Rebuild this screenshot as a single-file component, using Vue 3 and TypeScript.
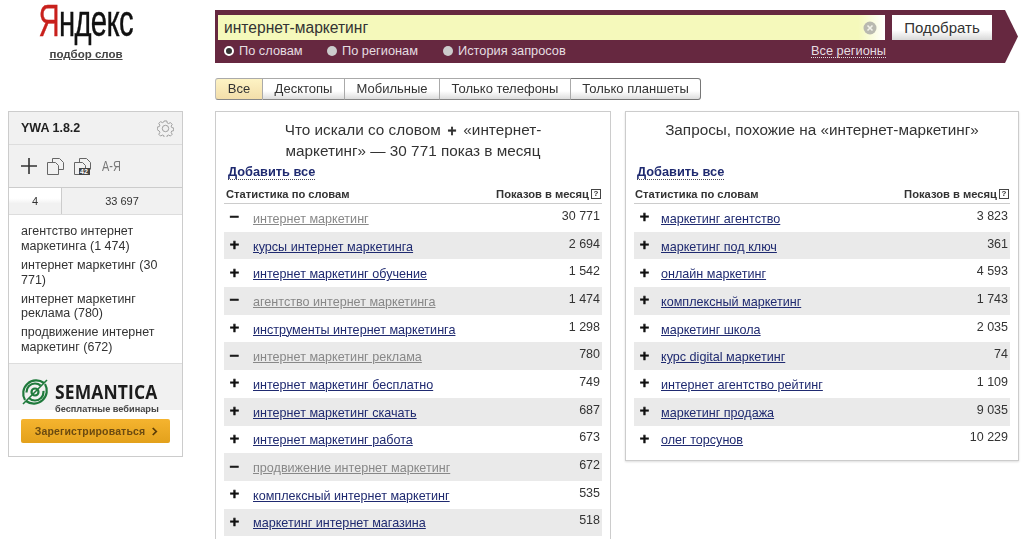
<script setup lang="ts">
interface Row { name: string; count: string; used?: boolean }
const leftRows: Row[] = [
  { name: 'интернет маркетинг', count: '30 771', used: true },
  { name: 'курсы интернет маркетинга', count: '2 694' },
  { name: 'интернет маркетинг обучение', count: '1 542' },
  { name: 'агентство интернет маркетинга', count: '1 474', used: true },
  { name: 'инструменты интернет маркетинга', count: '1 298' },
  { name: 'интернет маркетинг реклама', count: '780', used: true },
  { name: 'интернет маркетинг бесплатно', count: '749' },
  { name: 'интернет маркетинг скачать', count: '687' },
  { name: 'интернет маркетинг работа', count: '673' },
  { name: 'продвижение интернет маркетинг', count: '672', used: true },
  { name: 'комплексный интернет маркетинг', count: '535' },
  { name: 'маркетинг интернет магазина', count: '518' },
]
const rightRows: Row[] = [
  { name: 'маркетинг агентство', count: '3 823' },
  { name: 'маркетинг под ключ', count: '361' },
  { name: 'онлайн маркетинг', count: '4 593' },
  { name: 'комплексный маркетинг', count: '1 743' },
  { name: 'маркетинг школа', count: '2 035' },
  { name: 'курс digital маркетинг', count: '74' },
  { name: 'интернет агентство рейтинг', count: '1 109' },
  { name: 'маркетинг продажа', count: '9 035' },
  { name: 'олег торсунов', count: '10 229' },
]
const tabs = ['Все', 'Десктопы', 'Мобильные', 'Только телефоны', 'Только планшеты']
const modes = ['По словам', 'По регионам', 'История запросов']
const picks = ['агентство интернет маркетинга (1 474)', 'интернет маркетинг (30 771)', 'интернет маркетинг реклама (780)', 'продвижение интернет маркетинг (672)']
const panels = [
  { key: 'a', rows: leftRows },
  { key: 'b', rows: rightRows },
]
</script>

<template>
  <div class="page">
    <header class="top">
      <div class="brand">
        <div class="logo"><span class="ya">Я</span>ндекс</div>
        <a class="sub">подбор слов</a>
      </div>
      <div class="searchbar">
        <div class="search-row">
          <div class="input">
            <span>интернет-маркетинг</span>
            <svg class="clear" viewBox="0 0 14 14" width="14" height="14">
              <circle cx="7" cy="7" r="6.5" fill="#b9b9b0" />
              <path d="M4.5 4.5l5 5M9.500 4.500l-5 5" stroke="#f2f2ea" stroke-width="1.600" />
            </svg>
          </div>
          <button class="go">Подобрать</button>
        </div>
        <div class="mode-row">
          <span v-for="(m, i) in modes" :key="m" class="mode" :class="'mode' + i">
            <i class="radio" :class="{ on: i === 0 }"></i>{{ m }}
          </span>
          <a class="regions">Все регионы</a>
        </div>
        <svg class="arrow" viewBox="0 0 18 53" width="18" height="53" preserveAspectRatio="none">
          <path d="M0 0h5l13 26.500L5 53H0z" fill="#662840" />
        </svg>
      </div>
    </header>

    <nav class="tabs">
      <span v-for="(t, i) in tabs" :key="t" class="tab" :class="{ active: i === 0 }">{{ t }}</span>
    </nav>

    <div class="body">
      <aside class="side">
        <div class="side-head">
          <b>YWA 1.8.2</b>
          <svg viewBox="0 0 18 18" width="17" height="17" fill="none" stroke="#9a9a9a" stroke-width="1">
            <path d="M7.600 1h2.800l.4 2.100 1.500.7 1.900-1.100 1.900 2-1.100 1.800.6 1.500 2.100.5v2.800l-2.100.4-.6 1.500 1.100 1.900-1.900 1.900-1.900-1.100-1.500.6-.4 2.100H7.600l-.4-2.100-1.500-.6-1.900 1.100-1.900-1.900 1.100-1.900-.6-1.500L.3 10.300V7.500l2.100-.5.600-1.500-1.100-1.800 1.900-2 1.900 1.100 1.500-.7z" />
            <circle cx="9" cy="9" r="3.400" />
          </svg>
        </div>
        <div class="side-tools">
          <svg viewBox="0 0 16 16" width="16" height="16"><path d="M8 0v16M0 8h16" stroke="#333" stroke-width="1.600" /></svg>
          <svg viewBox="0 0 17 17" width="17" height="17" fill="none" stroke="#666"><path d="M.5 4.500h8l3 3v9H.5zM5.500 4.500V.5h7l4 4v7h-5" /></svg>
          <svg viewBox="0 0 17 17" width="17" height="17" fill="none" stroke="#666">
            <path d="M.5 4.500h8l3 3v9H.5zM5.500 4.500V.5h7l4 4v7" />
            <rect x="5" y="10" width="11" height="7" fill="#444" stroke="none" />
            <text x="6" y="16" font-size="7" font-weight="700" fill="#fff" stroke="none" font-family="Liberation Sans">42</text>
          </svg>
          <span class="az">А-Я</span>
        </div>
        <div class="side-stats">
          <span class="stat-a">4</span>
          <span class="stat-b">33 697</span>
        </div>
        <div class="side-list">
          <p v-for="p in picks" :key="p">{{ p }}</p>
        </div>
        <div class="promo">
          <div class="promo-logo">
            <svg viewBox="0 0 30 30" width="30" height="32" fill="none" stroke="#1f7a3c" stroke-width="2.200">
              <path d="M24 6A13 13 0 0 0 5 23" />
              <path d="M6 24A13 13 0 0 0 25 7" />
              <circle cx="15" cy="15" r="8.500" stroke-dasharray="20 6" />
              <circle cx="15" cy="15" r="3.500" />
              <path d="M3 27L27 3" stroke-width="1.600" />
            </svg>
            <div class="promo-text">
              <div class="sem">SEMANTICA</div>
              <div class="web">бесплатные вебинары</div>
            </div>
          </div>
        </div>
        <div class="promo-foot">
          <button class="reg">Зарегистрироваться
            <svg viewBox="0 0 8 10" width="7" height="9" fill="none" stroke="#5a3c08" stroke-width="2"><path d="M2 1l4 4-4 4" /></svg>
          </button>
        </div>
      </aside>

      <section v-for="(p, n) in panels" :key="p.key" class="panel" :class="'panel-' + p.key">
        <h2 v-if="n === 0">Что искали со словом <b class="ttl-plus">+</b> «интернет-<br />маркетинг» — 30 771 показ в месяц</h2>
        <h2 v-else>Запросы, похожие на «интернет-маркетинг»</h2>
        <a class="addall">Добавить все</a>
        <div class="thead">
          <span>Статистика по словам</span>
          <span class="thr">Показов в месяц<i class="q">?</i></span>
        </div>
        <div v-for="r in p.rows" :key="r.name" class="row" :class="{ used: r.used }">
          <b class="sign">{{ r.used ? '−' : '+' }}</b>
          <a class="name">{{ r.name }}</a>
          <span class="count">{{ r.count }}</span>
        </div>
      </section>
    </div>
  </div>
</template>

<style>
html, body { margin: 0; background: #fff; overflow: hidden; }
</style>

<style scoped>
.page {
  width: 1024px;
  height: 539px;
  overflow: hidden;
  font-family: "Liberation Sans", Arial, sans-serif;
  color: #222;
  filter: blur(0.3px);
}
.top { display: flex; height: 63px; padding-top: 10px; box-sizing: border-box; }
.brand { width: 215px; margin-top: -10px; display: flex; flex-direction: column; align-items: center; padding-right: 43px; box-sizing: border-box; }
.logo {
  font-size: 45px; line-height: 42px; color: #111; height: 42px; letter-spacing: -1px;
  transform: scaleX(.65); transform-origin: center; white-space: nowrap; -webkit-text-stroke: .4px #111;
}
.ya { color: #c8201c; -webkit-text-stroke: .4px #c8201c; }
.sub { font-size: 11.500px; font-weight: 700; color: #444; text-decoration: underline; margin-top: 6px; }
.searchbar { position: relative; width: 786px; height: 53px; background: #662840; box-sizing: border-box; padding: 5px 0 0 3px; }
.arrow { position: absolute; left: 786px; top: 0; margin-left: -1px; }
.search-row { display: flex; align-items: stretch; height: 25px; }
.input {
  width: 667px; display: flex; align-items: center; justify-content: space-between;
  padding: 0 8px 0 6px; box-sizing: border-box; font-size: 15.600px; color: #333;
  background: linear-gradient(90deg, #f5f9bb 96%, #fff 100%);
}
.go {
  margin-left: 7px; width: 100px; border: 0; padding: 0; font: inherit; font-size: 15px; color: #333;
  background: linear-gradient(#fff 60%, #d8d8d8);
}
.mode-row { display: flex; align-items: center; height: 21px; color: #e5dde0; font-size: 12.800px; position: relative; padding-bottom: 1px; }
.mode { display: flex; align-items: center; white-space: nowrap; }
.mode0 { margin-left: 6px; width: 103px; }
.mode1 { width: 116px; }
.radio { width: 10px; height: 10px; border-radius: 50%; background: #ccc; margin-right: 5px; box-sizing: border-box; }
.radio.on { background: #333; border: 2px solid #fff; }
.regions { position: absolute; left: 593px; border-bottom: 1px dotted #ddd; line-height: 13px; }
.tabs { display: flex; margin: 15px 0 0 215px; height: 22px; width: fit-content; }
.tab {
  display: flex; align-items: center; justify-content: center; font-size: 13px; color: #333; height: 22px; box-sizing: border-box; padding-bottom: 2px;
  border: 1px solid #aaa; border-left: 0; border-bottom-color: #888; background: linear-gradient(#fff 60%, #ddd); white-space: nowrap;
}
.tab:first-child { border-left: 1px solid #bbb; border-radius: 3px 0 0 3px; background: linear-gradient(#fdf3c4, #f3deaa); width: 48px; }
.tab:nth-child(2) { width: 82px; }
.tab:nth-child(3) { width: 95px; }
.tab:nth-child(4) { width: 131px; }
.tab:nth-child(5) { width: 130px; border-radius: 0 3px 3px 0; border-color: #777; }
.body { display: flex; align-items: flex-start; margin-top: 11px; padding-left: 8px; }
.side { width: 175px; border: 1px solid #ccc; box-sizing: border-box; margin-right: 32px; height: 346px; font-size: 12.500px; }
.side-head { height: 32px; background: #f1f1f1; display: flex; align-items: center; justify-content: space-between; padding: 0 8px 0 12px; border-bottom: 1px solid #ddd; font-size: 12.500px; color: #222; }
.side-tools { height: 42px; background: #f1f1f1; display: flex; align-items: center; gap: 10px; padding-left: 12px; border-bottom: 1px solid #ccc; }
.az { font-size: 14px; color: #777; transform: scaleX(.78); transform-origin: left; margin-left: 1px; }
.side-stats { display: flex; height: 26px; border-bottom: 1px solid #ddd; font-size: 11px; color: #333; text-align: center; line-height: 26px; background: #f1f1f1; }
.stat-a { width: 52px; border-right: 1px solid #ccc; background: linear-gradient(#fff 40%, #f1f1f1 60%); }
.stat-b { flex: 1; }
.side-list { padding: 9px 12px 0; height: 148px; box-sizing: border-box; }
.side-list p { margin: 0 0 4.400px; line-height: 14.700px; color: #333; }
.promo { height: 47px; background: #f1f1f1; border-top: 1px solid #ddd; padding: 12px 0 0 11px; box-sizing: border-box; }
.promo-logo { display: flex; gap: 5px; align-items: flex-start; }
.promo-text { padding-top: 6px; }
.sem { font-size: 19px; font-weight: 700; color: #1c1c1c; line-height: 20px; letter-spacing: .15px; font-family: "Open Sans", sans-serif; transform: scaleX(.92); transform-origin: left; white-space: nowrap; }
.web { font-size: 9.200px; font-weight: 700; color: #444; line-height: 10px; white-space: nowrap; margin-top: 2px; }
.promo-foot { padding: 9px 12px 0; }
.reg {
  width: 149px; height: 24px; border: 0; border-radius: 2px; padding: 0 0 0 2px; background: linear-gradient(#f5b42f, #e3a11c);
  font: inherit; font-size: 10.500px; font-weight: 700; color: #6b4a10; letter-spacing: .15px;
  display: flex; align-items: center; justify-content: center; gap: 6px;
}
.panel { width: 396px; height: 450px; border: 1px solid #ccc; border-bottom: 0; box-sizing: border-box; padding: 8px 8px 0; }
.panel-b { width: 394px; height: 350px; margin-left: 14px; border-bottom: 1px solid #ccc; box-shadow: 0 1px 2px #ddd; }
h2 { margin: 0; height: 43px; font-size: 15.300px; font-weight: 400; line-height: 20px; text-align: center; color: #333; white-space: nowrap; }
.ttl-plus { font-weight: 700; padding: 0 2px; font-family: "DejaVu Sans", sans-serif; font-size: 12px; -webkit-text-stroke: .6px #222; }
.addall { display: block; width: fit-content; margin: 2px 0 0 4px; font-size: 12.800px; font-weight: 700; color: #1f2a70; border-bottom: 1px dotted #445; line-height: 14px; }
.panel-b .addall { margin-left: 3px; }
.thead { display: flex; justify-content: space-between; align-items: center; font-size: 11.200px; font-weight: 700; height: 19px; margin-top: 5px; border-bottom: 1px solid #ccc; padding: 0 1px 0 2px; color: #333; box-sizing: border-box; }
.panel-b .thead { padding-left: 1px; }
.thr { display: flex; align-items: center; }
.q { width: 8px; height: 8px; border: 1px solid #444; font-size: 8px; line-height: 8px; text-align: center; font-style: normal; margin-left: 2px; }
.row { display: flex; height: 27.700px; align-items: center; font-size: 12.600px; position: relative; padding-top: 2px; box-sizing: border-box; }
.row:nth-child(odd) { background: #eaeaea; }
.sign { padding-left: 5px; margin-top: -3px; font-family: "DejaVu Sans", sans-serif; font-size: 13px; line-height: 16px; color: #111; box-sizing: border-box; width: 29px; font-weight: 700; -webkit-text-stroke: .6px #111; }
.panel-b .sign { width: 27px; }
.name { color: #1f2a70; text-decoration: underline; }
.row.used .name { color: #888; }
.count { margin-left: auto; margin-top: -6px; padding-right: 2px; font-size: 12.500px; color: #333; }
</style>
